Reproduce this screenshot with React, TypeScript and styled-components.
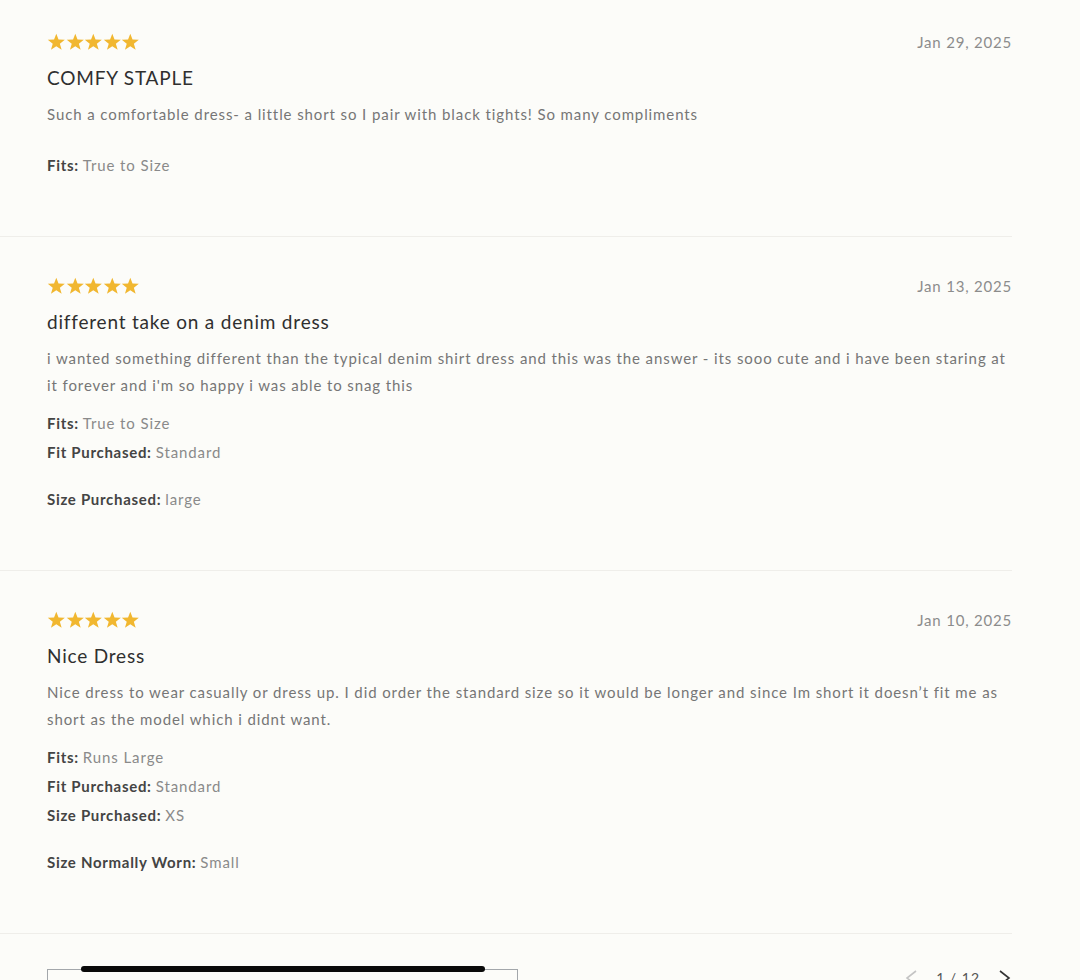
import React from 'react';
import styled, { createGlobalStyle } from 'styled-components';

const GlobalStyle = createGlobalStyle`
  html, body {
    margin: 0;
    padding: 0;
    overflow: hidden;
    background: #fcfcf9;
    font-family: Lato, "Noto Sans", sans-serif;
  }
`;

const Page = styled.div`
  width: 1012px;
  height: 980px;
  overflow: hidden;
`;

const ReviewList = styled.div`
  margin-top: -7px;
  display: flex;
  flex-direction: column;
`;

const ReviewItem = styled.article`
  padding: 40px 0 56px 47px;
  border-bottom: 1px solid #efeeea;
`;

const ReviewHeader = styled.div`
  display: flex;
  justify-content: space-between;
  align-items: center;
  height: 18px;
`;

const Stars = styled.div`
  display: flex;
`;

const DateText = styled.span`
  font-size: 15px;
  color: #8c8c8c;
  letter-spacing: 0.8px;
`;

const Title = styled.h3`
  margin: 15px 0 0;
  font-size: 19px;
  line-height: 24px;
  font-weight: 400;
  color: #2f2f2f;
  letter-spacing: 0.8px;
`;

const Body = styled.p`
  margin: 11px 0 0;
  font-size: 15px;
  line-height: 27px;
  color: #767676;
  letter-spacing: 0.9px;
`;

const Attributes = styled.div`
  margin-top: 10px;
  display: flex;
  flex-direction: column;
`;

const AttrRow = styled.div<{ $gap?: number }>`
  margin-top: ${p => p.$gap ?? 0}px;
  font-size: 15px;
  line-height: 29px;
`;

const AttrLabel = styled.span`
  font-weight: 700;
  color: #444;
  letter-spacing: 0.7px;
  margin-right: 4px;
`;

const AttrValue = styled.span`
  color: #8a8a8a;
  letter-spacing: 0.9px;
`;

const Footer = styled.div`
  display: flex;
  justify-content: space-between;
  align-items: flex-start;
  padding: 35px 0 0 47px;
`;

const Thumb = styled.div`
  position: relative;
  width: 469px;
  height: 60px;
  border: 1.5px solid #a3a7ab;
  border-bottom: none;
`;

const ScrollBar = styled.div`
  position: absolute;
  left: 33px;
  top: -4px;
  width: 404px;
  height: 6px;
  border-radius: 3px;
  background: #0a0a0a;
`;

const Pager = styled.div`
  display: flex;
  align-items: center;
  gap: 18px;
  font-size: 14px;
  color: #555;
  letter-spacing: 1px;
`;

const Star = () => (
  <svg width="18.6" height="18" viewBox="0 0 24 23">
    <polygon
      points="12,0.8 14.9,8.3 23,8.6 16.6,13.6 18.9,21.5 12,17 5.1,21.5 7.4,13.6 1,8.6 9.1,8.3"
      fill="#f1b730"
    />
  </svg>
);

type Attr = { label: string; value: string; gap?: number };

type Review = {
  date: string;
  title: string;
  body: string;
  attrs: Attr[];
};

const reviews: Review[] = [
  {
    date: 'Jan 29, 2025',
    title: 'COMFY STAPLE',
    body: 'Such a comfortable dress- a little short so I pair with black tights! So many compliments',
    attrs: [{ label: 'Fits:', value: 'True to Size', gap: 13 }],
  },
  {
    date: 'Jan 13, 2025',
    title: 'different take on a denim dress',
    body: "i wanted something different than the typical denim shirt dress and this was the answer - its sooo cute and i have been staring at it forever and i'm so happy i was able to snag this",
    attrs: [
      { label: 'Fits:', value: 'True to Size' },
      { label: 'Fit Purchased:', value: 'Standard' },
      { label: 'Size Purchased:', value: 'large', gap: 18 },
    ],
  },
  {
    date: 'Jan 10, 2025',
    title: 'Nice Dress',
    body: 'Nice dress to wear casually or dress up. I did order the standard size so it would be longer and since Im short it doesn\u2019t fit me as short as the model which i didnt want.',
    attrs: [
      { label: 'Fits:', value: 'Runs Large' },
      { label: 'Fit Purchased:', value: 'Standard' },
      { label: 'Size Purchased:', value: 'XS' },
      { label: 'Size Normally Worn:', value: 'Small', gap: 18 },
    ],
  },
];

const Chevron = ({ dir, color }: { dir: 'left' | 'right'; color: string }) => (
  <svg width="14" height="16" viewBox="0 0 14 16">
    <polyline
      points={dir === 'left' ? '12,1 3,8 12,15' : '2,1 11,8 2,15'}
      fill="none"
      stroke={color}
      strokeWidth="1.6"
    />
  </svg>
);

const App: React.FC = () => {
  return (
    <Page>
      <GlobalStyle />
      <ReviewList>
        {reviews.map(r => (
          <ReviewItem key={r.title}>
            <ReviewHeader>
              <Stars>
                {[0, 1, 2, 3, 4].map(i => (
                  <Star key={i} />
                ))}
              </Stars>
              <DateText>{r.date}</DateText>
            </ReviewHeader>
            <Title>{r.title}</Title>
            <Body>{r.body}</Body>
            <Attributes>
              {r.attrs.map(a => (
                <AttrRow key={a.label} $gap={a.gap}>
                  <AttrLabel>{a.label}</AttrLabel>
                  <AttrValue>{a.value}</AttrValue>
                </AttrRow>
              ))}
            </Attributes>
          </ReviewItem>
        ))}
      </ReviewList>
      <Footer>
        <Thumb>
          <ScrollBar />
        </Thumb>
        <Pager>
          <Chevron dir="left" color="#c4c4c4" />
          <span>1 / 12</span>
          <Chevron dir="right" color="#333" />
        </Pager>
      </Footer>
    </Page>
  );
};

export default App;
